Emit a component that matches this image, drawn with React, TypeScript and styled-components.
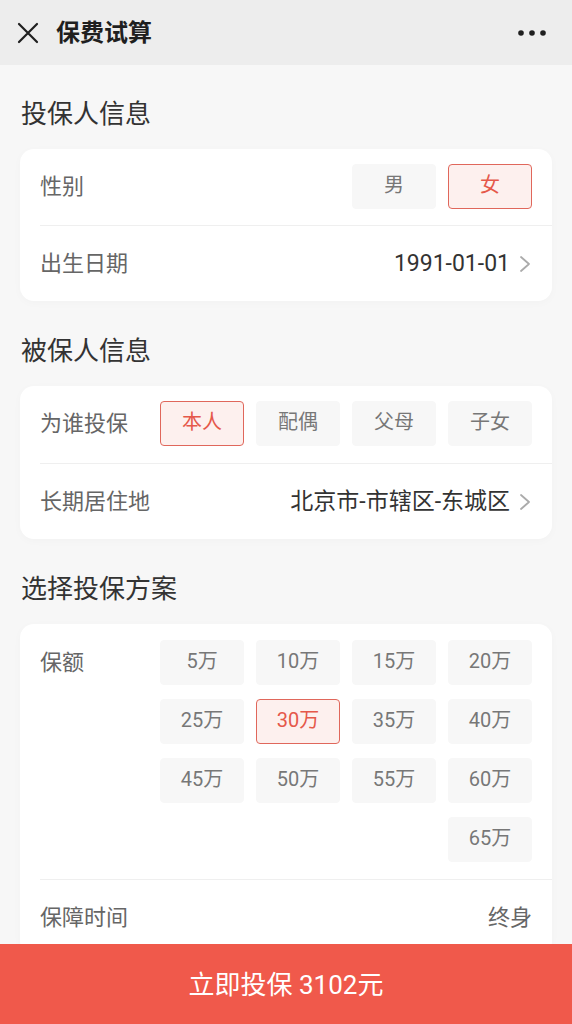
import React from "react";
import styled, { createGlobalStyle } from "styled-components";

const Global = createGlobalStyle`
  html, body { margin: 0; padding: 0; background: #f7f7f7; }
  body { font-family: "Roboto", "Noto Sans CJK SC", sans-serif; -webkit-font-smoothing: antialiased; }
  * { box-sizing: border-box; }
`;

const Page = styled.div`
  min-height: 1024px;
  background: #f7f7f7;
  padding-bottom: 100px;
`;

const Header = styled.header`
  height: 65px;
  background: #ededed;
  display: flex;
  align-items: center;
  padding: 0 26px 0 17px;
`;

const HeaderTitle = styled.h1`
  margin: 0 0 0 17px;
  flex: 1;
  font-size: 24px;
  font-weight: 700;
  color: #1f1f1f;
  line-height: 30px;
`;

const Content = styled.main`
  padding: 0 20px;
`;

const SectionTitle = styled.h2<{ $first?: boolean }>`
  margin: ${(p) => (p.$first ? "31px" : "32px")} 0 17px 1px;
  font-size: 26px;
  line-height: 36px;
  font-weight: 400;
  color: #333;
`;

const Card = styled.section`
  background: #fff;
  border-radius: 14px;
  box-shadow: 0 2px 10px rgba(0, 0, 0, 0.025);
  overflow: hidden;
`;

const Row = styled.div<{ $top?: boolean; $pad?: string }>`
  display: flex;
  align-items: ${(p) => (p.$top ? "flex-start" : "center")};
  justify-content: space-between;
  margin-left: 20px;
  padding: ${(p) => p.$pad || "0"};
  padding-right: 20px;
  min-height: 76px;
  & + & {
    border-top: 1px solid #efefef;
  }
`;

const Label = styled.span<{ $tall?: boolean }>`
  flex: none;
  width: 120px;
  font-size: 22px;
  line-height: ${(p) => (p.$tall ? "45px" : "30px")};
  color: #666;
`;

const Value = styled.span<{ $muted?: boolean }>`
  display: flex;
  align-items: center;
  gap: 8px;
  font-size: ${(p) => (p.$muted ? "22px" : "23px")};
  line-height: 30px;
  color: ${(p) => (p.$muted ? "#666" : "#333")};
`;

const Options = styled.div`
  flex: 1;
  display: flex;
  flex-wrap: wrap;
  justify-content: flex-end;
  gap: 14px 12px;
`;

const Option = styled.button<{ $active?: boolean }>`
  width: 84px;
  height: 45px;
  margin: 0;
  padding: 0 0 4px;
  border-radius: 4px;
  border: 1.5px solid ${(p) => (p.$active ? "#e0675b" : "#f7f7f7")};
  background: ${(p) => (p.$active ? "#fdf0ee" : "#f7f7f7")};
  color: ${(p) => (p.$active ? "#e5584a" : "#777")};
  font-family: inherit;
  font-size: 20px;
  line-height: 26px;
`;

const BottomBar = styled.button`
  position: fixed;
  left: 0;
  right: 0;
  bottom: 0;
  height: 80px;
  border: none;
  background: #f0594b;
  color: #fff;
  font-family: inherit;
  font-size: 26px;
  padding: 0 0 4px;
`;

const CloseIcon = () => (
  <svg width="22" height="22" viewBox="0 0 22 22">
    <path d="M2 2 L20 20 M20 2 L2 20" stroke="#1f1f1f" strokeWidth="2.2" strokeLinecap="round" />
  </svg>
);

const MoreIcon = () => (
  <svg width="28" height="8" viewBox="0 0 28 8">
    <circle cx="3" cy="4" r="2.8" fill="#1f1f1f" />
    <circle cx="14" cy="4" r="2.8" fill="#1f1f1f" />
    <circle cx="25" cy="4" r="2.8" fill="#1f1f1f" />
  </svg>
);

const Chevron = () => (
  <svg width="14" height="18" viewBox="0 0 14 18">
    <path d="M3 2 L11 9 L3 16" fill="none" stroke="#ababab" strokeWidth="1.8" strokeLinecap="round" strokeLinejoin="round" />
  </svg>
);

const amounts = [5, 10, 15, 20, 25, 30, 35, 40, 45, 50, 55, 60, 65];

export default function App() {
  return (
    <Page>
      <Global />
      <Header>
        <CloseIcon />
        <HeaderTitle>保费试算</HeaderTitle>
        <MoreIcon />
      </Header>
      <Content>
        <SectionTitle $first>投保人信息</SectionTitle>
        <Card>
          <Row $pad="15px 0 16px">
            <Label>性别</Label>
            <Options>
              <Option>男</Option>
              <Option $active>女</Option>
            </Options>
          </Row>
          <Row>
            <Label>出生日期</Label>
            <Value>
              1991-01-01
              <Chevron />
            </Value>
          </Row>
        </Card>

        <SectionTitle>被保人信息</SectionTitle>
        <Card>
          <Row $pad="15px 0 17px">
            <Label>为谁投保</Label>
            <Options>
              <Option $active>本人</Option>
              <Option>配偶</Option>
              <Option>父母</Option>
              <Option>子女</Option>
            </Options>
          </Row>
          <Row>
            <Label>长期居住地</Label>
            <Value>
              北京市-市辖区-东城区
              <Chevron />
            </Value>
          </Row>
        </Card>

        <SectionTitle>选择投保方案</SectionTitle>
        <Card>
          <Row $top $pad="16px 0 17px">
            <Label $tall>保额</Label>
            <Options>
              {amounts.map((a) => (
                <Option key={a} $active={a === 30}>
                  {a}万
                </Option>
              ))}
            </Options>
          </Row>
          <Row>
            <Label>保障时间</Label>
            <Value $muted>终身</Value>
          </Row>
        </Card>
      </Content>
      <BottomBar>立即投保 3102元</BottomBar>
    </Page>
  );
}
